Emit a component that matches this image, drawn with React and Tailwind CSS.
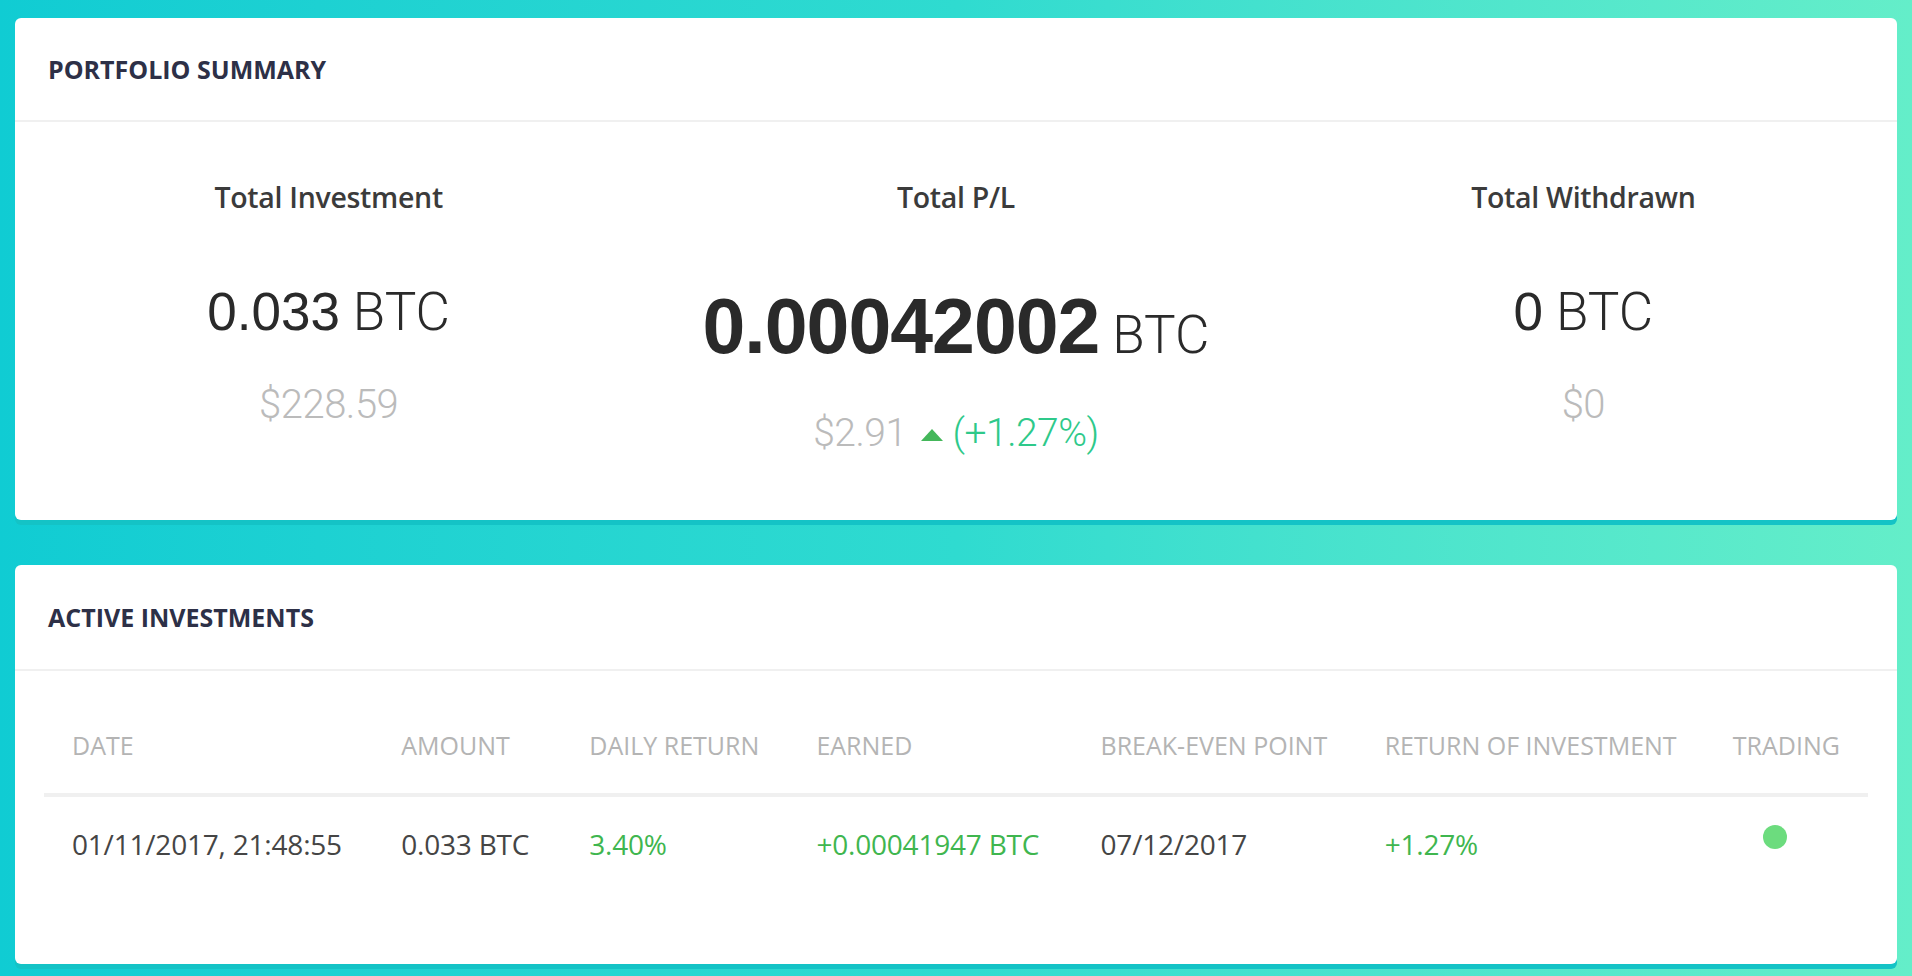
import React from 'react'

const summary = [
    { label: 'Total Investment', value: '0.033', sub: '$228.59' },
    { label: 'Total P/L', value: '0.00042002', big: true, sub: '$2.91', change: '(+1.27%)' },
    { label: 'Total Withdrawn', value: '0', sub: '$0' },
]

const columns = [
    { title: 'Date', w: 'w-[329px]' },
    { title: 'Amount', w: 'w-[188px]' },
    { title: 'Daily Return', w: 'w-[227px]' },
    { title: 'Earned', w: 'w-[284px]' },
    { title: 'Break-even Point', w: 'w-[284px]' },
    { title: 'Return of Investment', w: 'w-[348px]' },
    { title: 'Trading', w: 'w-[163px]' },
]

const CardHeader = ({ children, tall }) => (
    <div className={`${tall ? 'h-[106px]' : 'h-[104px]'} flex items-center pl-[33px] border-b-2 border-[#f0f0f0]`}>
        <h2 className="font-['Open_Sans',sans-serif] font-bold text-[25px] text-[#2d3047] uppercase leading-none">
            {children}
        </h2>
    </div>
)

const SummaryColumn = ({ item }) => (
    <div className="flex flex-col items-center">
        <div className="font-['Open_Sans',sans-serif] font-semibold text-[28.5px] leading-[36px] text-[#3b3b3b] tracking-[-0.3px]">
            {item.label}
        </div>
        <div className={`leading-none text-[#2a2a2a] whitespace-nowrap ${item.big ? 'mt-[73px]' : 'mt-[70px]'}`}>
            <span className={`font-['Liberation_Sans',Arial,sans-serif] ${item.big ? 'text-[77px] font-bold tracking-[-1px]' : 'text-[53px] font-normal'}`}>
                {item.value}
            </span>
            <span className="font-['Roboto',sans-serif] font-light text-[53px]"> BTC</span>
        </div>
        <div className={`${item.big ? 'mt-[49px] text-[39px]' : 'mt-[46px] text-[40px]'} flex items-center font-['Roboto',sans-serif] font-light leading-none text-[#bbbbbb] tracking-[-0.5px]`}>
            <span>{item.sub}</span>
            {item.change && (
                <>
                    <svg className="ml-[14px] mr-[10px] mt-[2px]" width="22" height="12" viewBox="0 0 22 12">
                        <path d="M11 0 L22 12 L0 12 Z" fill="#44b75a" />
                    </svg>
                    <span className="text-[#2ec98a]">{item.change}</span>
                </>
            )}
        </div>
    </div>
)

const App = () => {
    return (
        <div className="min-h-[976px] bg-linear-to-r from-[#10ccd3] via-[#2fdbd0] to-[#64eec9] px-[15px] pt-[18px] pb-[10px]">
            {/* Portfolio summary */}
            <div className="bg-white rounded-md shadow-[0_5px_0_#14c3c6]">
                <CardHeader>Portfolio Summary</CardHeader>
                <div className="grid grid-cols-3 pt-[57px] pb-[67px]">
                    {summary.map((item) => (
                        <SummaryColumn key={item.label} item={item} />
                    ))}
                </div>
            </div>

            {/* Active investments */}
            <div className="mt-[45px] bg-white rounded-md shadow-[0_5px_0_#14c3c6]">
                <CardHeader tall>Active Investments</CardHeader>
                <div className="px-[29px] pt-[57px] pb-[101px]">
                    <table className="w-full table-fixed border-collapse font-['Open_Sans',sans-serif]">
                        <thead>
                            <tr className="border-b-4 border-[#f0f0f0]">
                                {columns.map((c) => (
                                    <th key={c.title} className={`${c.w} text-left font-normal uppercase text-[25px] leading-[34px] text-[#b4b4b4] pl-[28px] pb-[31px] whitespace-nowrap`}>
                                        {c.title}
                                    </th>
                                ))}
                            </tr>
                        </thead>
                        <tbody>
                            <tr className="text-[28px] leading-[38px] text-[#454545] tracking-[-0.2px]">
                                <td className="pl-[28px] pt-[28px] whitespace-nowrap align-top">01/11/2017, 21:48:55</td>
                                <td className="pl-[28px] pt-[28px] whitespace-nowrap align-top">0.033 BTC</td>
                                <td className="pl-[28px] pt-[28px] whitespace-nowrap align-top text-[#3fb64f]">3.40%</td>
                                <td className="pl-[28px] pt-[28px] whitespace-nowrap align-top text-[#3fb64f]">+0.00041947 BTC</td>
                                <td className="pl-[28px] pt-[28px] whitespace-nowrap align-top">07/12/2017</td>
                                <td className="pl-[28px] pt-[28px] whitespace-nowrap align-top text-[#3fb64f]">+1.27%</td>
                                <td className="pl-[28px] pt-[28px] align-top">
                                    <div className="ml-[30px] w-[24px] h-[24px] rounded-full bg-[#6cdc7e]"></div>
                                </td>
                            </tr>
                        </tbody>
                    </table>
                </div>
            </div>
        </div>
    )
}

export default App
